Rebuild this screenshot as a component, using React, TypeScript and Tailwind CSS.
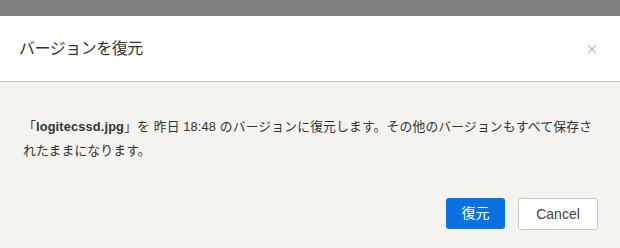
export default function App() {
  return (
    <div className="w-[620px] h-[248px] bg-[#808080] pt-4 overflow-hidden font-['Liberation_Sans','Noto_Sans_CJK_JP',sans-serif]">
      <div className="bg-white h-[66px] flex items-center justify-between pl-[19px] pr-[20px] border-b border-[#c6c6c6]">
        <h1 className="text-[16px] text-[#333] tracking-[-0.5px]">バージョンを復元</h1>
        <button type="button" className="text-[#bbbbbb] w-4 h-4 flex items-center justify-center">
          <svg width="10" height="10" viewBox="0 0 10 10" stroke="currentColor" strokeWidth="1.2">
            <path d="M1 1l8 8M9 1l-8 8" />
          </svg>
        </button>
      </div>
      <div className="bg-[#f4f3f0] h-[166px] flex flex-col">
        <p className="pt-[33px] pl-[23px] pr-[26px] text-[12.8px] tracking-[0.15px] leading-[24px] text-[#333]">
          「<span className="font-bold">logitecssd.jpg</span>」を 昨日 18:48 のバージョンに復元します。その他のバージョンもすべて保存されたままになります。
        </p>
        <div className="mt-auto mb-[18px] flex justify-end gap-[13px] pr-[22px]">
          <button type="button" className="w-[59px] h-[31px] rounded-[3px] bg-[#0a71e0] text-white text-[14px]">
            復元
          </button>
          <button type="button" className="w-[80px] h-[32px] rounded-[3px] bg-white border border-[#c9c9c9] text-[#444] text-[14px]">
            Cancel
          </button>
        </div>
      </div>
    </div>
  );
}
